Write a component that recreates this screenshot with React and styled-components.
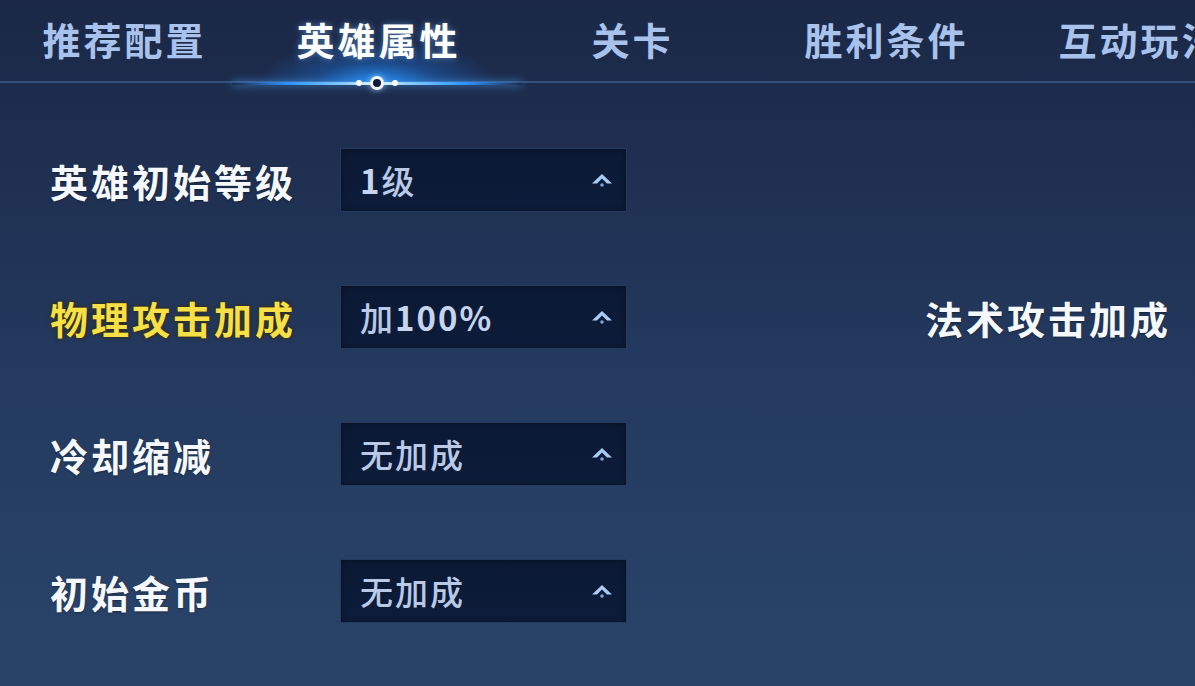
import React from "react";
import styled, { createGlobalStyle } from "styled-components";

const GlobalStyle = createGlobalStyle`
  html, body {
    margin: 0;
    padding: 0;
    background: #1c2a49;
  }
  * {
    box-sizing: border-box;
  }
`;

const Page = styled.div`
  width: 1195px;
  height: 686px;
  overflow: hidden;
  font-family: "Noto Sans CJK SC", "Noto Sans", sans-serif;
  font-weight: 700;
  background: linear-gradient(180deg, #1b2847 0%, #1e2e4f 20%, #243a5f 55%, #2a4469 100%);
`;

const TabBar = styled.div`
  display: flex;
  height: 83px;
  margin-left: -4px;
  border-bottom: 2px solid #34507c;
  position: relative;
`;

const Tab = styled.div`
  position: relative;
  flex: 0 0 254px;
  display: flex;
  justify-content: center;
  padding-top: 12px;
  font-size: 38px;
  line-height: 54px;
  letter-spacing: 3px;
  text-indent: 3px;
  white-space: nowrap;
  color: ${p => (p.$active ? "#ffffff" : "#a8c2ec")};
  text-shadow: ${p => (p.$active ? "0 0 6px rgba(120,190,255,0.5)" : "none")};

  &::before {
    content: "";
    display: ${p => (p.$active ? "block" : "none")};
    position: absolute;
    left: 50%;
    bottom: -2px;
    width: 300px;
    height: 70px;
    transform: translateX(-50%);
    background: radial-gradient(ellipse 40% 60% at 50% 100%, rgba(35, 145, 255, 0.95), rgba(30, 125, 240, 0.35) 50%, rgba(30, 120, 240, 0) 100%);
    pointer-events: none;
  }
`;

const TabLabel = styled.span`
  position: relative;
`;

const Glow = styled.div`
  position: absolute;
  left: 50%;
  bottom: -8px;
  width: 290px;
  height: 12px;
  transform: translateX(-50%);
  display: flex;
  align-items: center;
  justify-content: center;
`;

const GlowLine = styled.div`
  position: absolute;
  left: 0;
  right: 0;
  top: 5px;
  height: 3px;
  background: linear-gradient(90deg, rgba(60,160,255,0) 0%, #2f95ff 20%, #8ccfff 40%, #ffffff 50%, #8ccfff 60%, #2f95ff 80%, rgba(60,160,255,0) 100%);
  box-shadow: 0 0 8px rgba(80, 170, 255, 0.9);
`;

const GlowRing = styled.div`
  position: relative;
  width: 14px;
  height: 14px;
  border-radius: 50%;
  border: 3px solid #f4f9ff;
  background: #0f1c38;
  box-shadow: 0 0 6px rgba(150, 210, 255, 0.9);
`;

const GlowDot = styled.div`
  position: relative;
  width: 6px;
  height: 6px;
  border-radius: 50%;
  background: #ffffff;
  margin: 0 8px;
`;

const Form = styled.div`
  display: grid;
  grid-template-columns: 290px 287px 298px auto;
  grid-auto-rows: 64px;
  row-gap: 73px;
  align-items: center;
  padding: 65px 0 0 50px;
`;

const Label = styled.div`
  font-size: 38px;
  letter-spacing: 3px;
  white-space: nowrap;
  color: ${p => (p.$highlight ? "#f6e046" : "#f5f8fd")};
  text-shadow: ${p =>
    p.$highlight
      ? "0 0 2px #3a2c00, 0 0 4px rgba(60,40,0,0.8)"
      : "0 1px 2px rgba(0,0,0,0.35)"};
`;

const Select = styled.div`
  height: 64px;
  display: flex;
  align-items: center;
  justify-content: space-between;
  padding: 0 12px 0 19px;
  background: linear-gradient(180deg, #0b1934 0%, #0d1c3a 100%);
  border: 1px solid #263a5d;
  box-shadow: inset 0 0 6px rgba(0, 0, 0, 0.4);
`;

const Value = styled.div`
  font-size: 33px;
  letter-spacing: 2px;
  color: #b9c9e6;
  font-weight: 500;
  white-space: nowrap;
`;

const Strong = styled.span`
  font-weight: 700;
  color: #c6d4ee;
`;

const Caret = () => (
  <svg width="24" height="18" viewBox="0 0 24 18">
    <path d="M2 12.5 L12 3 L22 12.5 L17 12.5 L12 7.5 L7 12.5 Z" fill="#a9cbf5" />
    <circle cx="12" cy="14" r="1.8" fill="#7aa3da" />
  </svg>
);

const tabs = ["推荐配置", "英雄属性", "关卡", "胜利条件", "互动玩法"];

export default function App() {
  return (
    <Page>
      <GlobalStyle />
      <TabBar>
        {tabs.map((t, i) => (
          <Tab key={t} $active={i === 1}>
            <TabLabel>{t}</TabLabel>
            {i === 1 && (
              <Glow>
                <GlowLine />
                <GlowDot />
                <GlowRing />
                <GlowDot />
              </Glow>
            )}
          </Tab>
        ))}
      </TabBar>
      <Form>
        <Label>英雄初始等级</Label>
        <Select>
          <Value>
            <Strong>1</Strong>级
          </Value>
          <Caret />
        </Select>
        <div />
        <div />

        <Label $highlight>物理攻击加成</Label>
        <Select>
          <Value>
            加<Strong>100%</Strong>
          </Value>
          <Caret />
        </Select>
        <div />
        <Label>法术攻击加成</Label>

        <Label>冷却缩减</Label>
        <Select>
          <Value>无加成</Value>
          <Caret />
        </Select>
        <div />
        <div />

        <Label>初始金币</Label>
        <Select>
          <Value>无加成</Value>
          <Caret />
        </Select>
        <div />
        <div />
      </Form>
    </Page>
  );
}
